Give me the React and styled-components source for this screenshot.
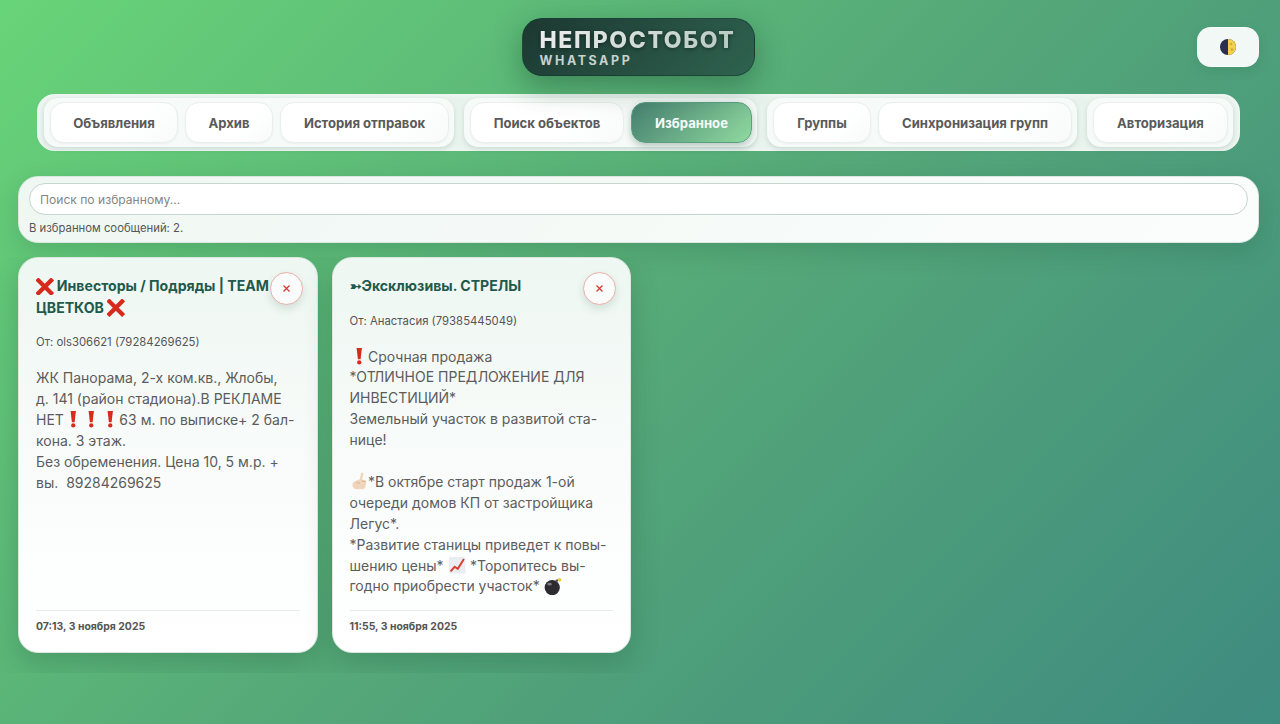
import React from "react";
import styled, {createGlobalStyle} from "styled-components";

const GlobalStyle = createGlobalStyle`
  html, body {
    margin: 0;
    padding: 0;
    height: 100%;
  }
  body {
    min-height: 724px;
    overflow: hidden;
    font-family: Inter, "Noto Sans", sans-serif;
    background: linear-gradient(135deg, #68d478 0%, #55a878 50%, #3e8b80 100%);
  }
`;

const Page = styled.div`
  height: 724px;
  box-sizing: border-box;
  padding: 18px 21px 0 18px;
`;
const Header = styled.header`
  position: relative;
  display: flex;
  justify-content: center;
  margin-bottom: 17.5px;
  padding-right: 1px;
`;
const Logo = styled.div`
  width: 233px;
  height: 58px;
  box-sizing: border-box;
  padding: 9px 17px;
  border-radius: 20px;
  border: 1px solid rgba(20, 60, 50, 0.6);
  background: linear-gradient(135deg, #1c3831 0%, #2f6350 100%);
  box-shadow: 0 10px 30px rgba(15, 60, 40, 0.4);
`;
const LogoTitle = styled.div`
  font-size: 23px;
  line-height: 24px;
  font-weight: 800;
  letter-spacing: 1.6px;
  color: transparent;
  background: linear-gradient(135deg, #eeeeee 0%, #b4c8c0 100%);
  background-clip: text;
  -webkit-background-clip: text;
  white-space: nowrap;
  filter: drop-shadow(0 1px 2px rgba(0, 0, 0, 0.45));
`;
const LogoSub = styled.div`
  margin-top: 2px;
  font-size: 12.5px;
  line-height: 13px;
  font-weight: 700;
  letter-spacing: 2.55px;
  color: #c8d2ce;
`;
const ThemeToggle = styled.button`
  position: absolute;
  top: 9px;
  right: 0;
  width: 62px;
  height: 40px;
  display: flex;
  align-items: center;
  justify-content: center;
  padding: 0;
  border: 1px solid rgba(255, 255, 255, 0.5);
  border-radius: 14px;
  background: #f2f8f5;
  box-shadow: 0 4px 12px rgba(20, 70, 50, 0.12);
`;
const Nav = styled.nav`
  display: flex;
  justify-content: center;
  gap: 10px;
  width: 1203px;
  height: 57px;
  box-sizing: border-box;
  margin: 0 0 25.5px 19px;
  padding: 4px 7px;
  border-radius: 18px;
  background: #e9f3ee;
  box-shadow: inset 0 0 6px rgba(255, 255, 255, 0.6);
`;
const NavGroup = styled.div`
  display: flex;
  align-items: center;
  gap: 7px;
  height: 49px;
  box-sizing: border-box;
  padding: 0 5px 0 6px;
  border-radius: 14px;
  background: #f6faf8;
  box-shadow: 0 2px 5px rgba(40, 90, 70, 0.16);
`;
const NavButton = styled.button`
  width: ${({width}) => width}px;
  height: 41px;
  padding: 1px 0 0;
  box-sizing: border-box;
  border-radius: 14px;
  border: 1px solid ${({active}) => (active ? "#5a9f80" : "#e9efec")};
  background: ${({active}) => (active ? "linear-gradient(135deg, #457f70 0%, #90da9f 100%)" : "linear-gradient(135deg, #ffffff 60%, #f8fbfa 100%)")};
  box-shadow: ${({active}) => (active ? "0 3px 7px rgba(30, 80, 60, 0.3)" : "0 1px 2px rgba(40, 90, 70, 0.06)")};
  color: ${({active}) => (active ? "#f6fbf8" : "#5a5a5a")};
  font-family: inherit;
  font-size: 13.1px;
  font-weight: 700;
`;
const SearchPanel = styled.section`
  height: 67px;
  box-sizing: border-box;
  padding: 6px 10px 0;
  margin-bottom: 14px;
  border-radius: 20px;
  border: 1px solid #dbe6e1;
  background: linear-gradient(135deg, #eff7f3 0%, #fbfdfc 100%);
  box-shadow: 0 8px 24px rgba(20, 70, 50, 0.18);
`;
const SearchInput = styled.input`
  display: block;
  width: 100%;
  height: 32px;
  box-sizing: border-box;
  padding: 0 10px;
  border: 1px solid #c5d5cf;
  border-radius: 16px;
  background: #ffffff;
  font-family: inherit;
  font-size: 12.1px;
  outline: none;
  &::placeholder {
    color: #858585;
  }
`;
const SearchCount = styled.div`
  margin-top: 6px;
  font-size: 11.3px;
  line-height: 14px;
  color: #555555;
`;
const Cards = styled.div`
  display: grid;
  grid-template-columns: repeat(auto-fill, 299.5px);
  gap: 14px;
  margin: 0 -21px 0 -18px;
  padding: 0 21px 20px 18px;
  overflow: hidden;
`;
const Card = styled.article`
  position: relative;
  display: flex;
  flex-direction: column;
  height: 396px;
  box-sizing: border-box;
  padding: 17px 17px 18px;
  border-radius: 20px;
  border: 1px solid #dbe6e1;
  background: linear-gradient(180deg, #eef7f2 0%, #fcfdfd 70%, #ffffff 100%);
  box-shadow: 0 10px 28px rgba(20, 70, 50, 0.24);
`;
const CardTitle = styled.h3`
  margin: 0 0 17px;
  font-size: 14.1px;
  line-height: 21.5px;
  font-weight: 700;
  color: #1f5a4c;
`;
const RemoveButton = styled.button`
  position: absolute;
  top: 14px;
  right: 14px;
  width: 33px;
  height: 33px;
  padding: 0;
  display: flex;
  align-items: center;
  justify-content: center;
  border-radius: 50%;
  border: 1px solid #e9b0a8;
  background: #f9fcfb;
  box-shadow: 0 4px 9px rgba(30, 80, 60, 0.14);
`;
const Sender = styled.div`
  margin-bottom: 19px;
  font-size: 11.35px;
  line-height: 14px;
  color: #555555;
`;
const CardBody = styled.div`
  flex: 1;
  min-height: 0;
  font-size: 14px;
  line-height: 20.9px;
  color: #5c5c5c;
  white-space: pre-line;
`;
const CardDate = styled.footer`
  margin-top: 12px;
  padding-top: 9px;
  border-top: 1px solid #e6ecea;
  font-size: 10.45px;
  line-height: 14px;
  font-weight: 700;
  color: #555555;
`;
const Emoji = styled.svg`
  display: inline-block;
  width: ${({size}) => size || 18.5}px;
  height: ${({size}) => size || 18.5}px;
  margin: -3px 0;
  vertical-align: -1px;
`;

const CrossMark = () => (
    <Emoji size={17.5} viewBox="0 0 18 18">
        <path d="M2.5 2.5 L15.5 15.5 M15.5 2.5 L2.5 15.5" stroke="#d82a1c" strokeWidth="4.4" strokeLinecap="square"/>
    </Emoji>
);
const Exclamation = () => (
    <Emoji viewBox="0 0 18 18">
        <path d="M6.4 1 H11.6 L10.3 11.8 H7.7 Z" fill="#d92a1e"/>
        <circle cx="9" cy="15" r="2.1" fill="#d92a1e"/>
    </Emoji>
);
const PointUp = () => (
    <Emoji viewBox="0 0 18 18">
        <path d="M11.6 .8 c1.1 -.3 1.8 .4 1.6 1.4 L11.6 7.4 l2.6 .5 c1.3 .3 1.7 1.2 1.5 2.3 l-.6 3.8 c-.3 1.6 -1.5 2.8 -3.2 2.8 H7 c-2.4 0 -4.6 -1.6 -4.6 -4.2 c0 -2 1.3 -3.6 3.4 -4.2 L9.6 7 L10.6 1.8 c.1 -.5 .5 -.9 1 -1 Z" fill="#f0d4bc"/>
        <path d="M11.4 8.8 l3.6 .5 M6 10.8 c1.5 -.8 2.8 -.5 3.6 .6" stroke="#cfa98c" strokeWidth=".7" fill="none"/>
    </Emoji>
);
const ChartUp = () => (
    <Emoji viewBox="0 0 18 18">
        <rect x="1" y="1" width="16" height="16" rx="1" fill="#e9edf1"/>
        <path d="M2.5 15 L6.5 10.5 L9.5 12.5 L15.5 3" stroke="#d93a2e" strokeWidth="1.8" fill="none"/>
    </Emoji>
);
const Bomb = () => (
    <Emoji viewBox="0 0 18 18">
        <circle cx="8" cy="10.3" r="7.4" fill="#2c2c30"/>
        <ellipse cx="5.4" cy="7" rx="2.2" ry="1.3" fill="#7c7c82"/>
        <path d="M11.5 4.5 L13.5 2.8" stroke="#555555" strokeWidth="2"/>
        <circle cx="15.2" cy="2.6" r="1.7" fill="#f2c63a"/>
    </Emoji>
);
const MoonIcon = () => (
    <svg width="16" height="16" viewBox="0 0 16 16">
        <circle cx="8" cy="8" r="8" fill="#2a2f52"/>
        <path d="M8 0 A8 8 0 0 1 8 16 Z" fill="#f3d04e"/>
        <circle cx="11" cy="5" r="1.3" fill="#d8ae3a"/>
        <circle cx="12" cy="10.5" r="1.5" fill="#d8ae3a"/>
    </svg>
);
const CloseIcon = () => (
    <svg width="9" height="9" viewBox="0 0 9 9">
        <path d="M1.5 1.5 L7.5 7.5 M7.5 1.5 L1.5 7.5" stroke="#d0392e" strokeWidth="1.2"/>
    </svg>
);

const navGroups = [
    [["Объявления", 128], ["Архив", 88], ["История отправок", 169]],
    [["Поиск объектов", 154], ["Избранное", 121, true]],
    [["Группы", 98], ["Синхронизация групп", 194]],
    [["Авторизация", 135]],
];

export default function App() {
    return (
        <Page>
            <GlobalStyle/>
            <Header>
                <Logo>
                    <LogoTitle>НЕПРОСТОБОТ</LogoTitle>
                    <LogoSub>WHATSAPP</LogoSub>
                </Logo>
                <ThemeToggle aria-label="Сменить тему"><MoonIcon/></ThemeToggle>
            </Header>
            <Nav>
                {navGroups.map((group, index) => (
                    <NavGroup key={index}>
                        {group.map(([label, width, active]) => (
                            <NavButton key={label} width={width} active={active}>{label}</NavButton>
                        ))}
                    </NavGroup>
                ))}
            </Nav>
            <SearchPanel>
                <SearchInput placeholder="Поиск по избранному..."/>
                <SearchCount>В избранном сообщений: 2.</SearchCount>
            </SearchPanel>
            <Cards>
                <Card>
                    <CardTitle><CrossMark/> Инвесторы / Подряды | TEAM<br/>ЦВЕТКОВ <CrossMark/></CardTitle>
                    <RemoveButton aria-label="Убрать"><CloseIcon/></RemoveButton>
                    <Sender>От: ols306621 (79284269625)</Sender>
                    <CardBody>
                        {"ЖК Панорама, 2-х ком.кв., Жлобы,\nд. 141 (район стадиона).В РЕКЛАМЕ\nНЕТ"}
                        <Exclamation/><Exclamation/><Exclamation/>
                        {"63 м. по выписке+ 2 бал-\nкона. 3 этаж.\nБез обременения. Цена 10, 5 м.р. +\nвы.\u00a0 89284269625"}
                    </CardBody>
                    <CardDate>07:13, 3 ноября 2025</CardDate>
                </Card>
                <Card>
                    <CardTitle>➳Эксклюзивы. СТРЕЛЫ</CardTitle>
                    <RemoveButton aria-label="Убрать"><CloseIcon/></RemoveButton>
                    <Sender>От: Анастасия (79385445049)</Sender>
                    <CardBody>
                        <Exclamation/>
                        {"Срочная продажа\n*ОТЛИЧНОЕ ПРЕДЛОЖЕНИЕ ДЛЯ\nИНВЕСТИЦИЙ*\nЗемельный участок в развитой ста-\nнице!\n\u00a0\n"}
                        <PointUp/>
                        {"*В октябре старт продаж 1-ой\nочереди домов КП от застройщика\nЛегус*.\n*Развитие станицы приведет к повы-\nшению цены* "}
                        <ChartUp/>
                        {" *Торопитесь вы-\nгодно приобрести участок* "}
                        <Bomb/>
                    </CardBody>
                    <CardDate>11:55, 3 ноября 2025</CardDate>
                </Card>
            </Cards>
        </Page>
    );
}
